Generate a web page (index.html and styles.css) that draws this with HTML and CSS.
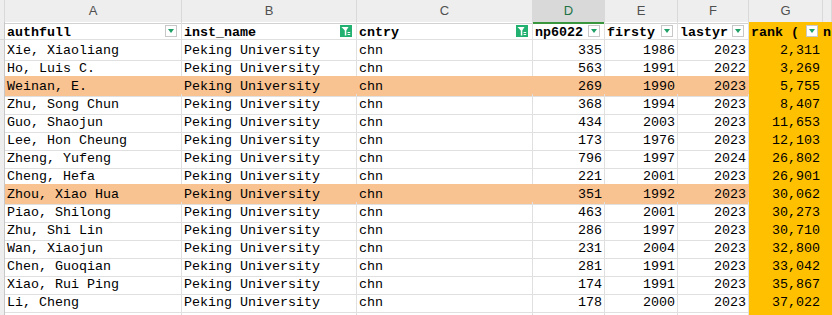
FILE: index.html
```html
<!DOCTYPE html>
<html>
<head>
<meta charset="utf-8">
<link rel="stylesheet" href="styles.css">
</head>
<body>
<div class="sheet">
  <div class="row letters">
    <div class="c stub"></div>
    <div class="c">A</div>
    <div class="c">B</div>
    <div class="c">C</div>
    <div class="c sel">D</div>
    <div class="c">E</div>
    <div class="c">F</div>
    <div class="c">G</div>
    <div class="c"></div>
  </div>
  <div class="row head">
    <div class="c stub"></div>
    <div class="c"><span class="t">authfull</span><span class="dd"></span></div>
    <div class="c"><span class="t">inst_name</span><span class="fl"><svg viewBox="0 0 12 12" width="12" height="12"><path d="M1.5 2h7L6.3 5.4V10.5H4.8V5.4Z" fill="#fff"/><path d="M7.6 7.5h2.6M7.6 9.5h2.6" stroke="#fff" stroke-width="1"/></svg></span></div>
    <div class="c"><span class="t">cntry</span><span class="fl"><svg viewBox="0 0 12 12" width="12" height="12"><path d="M1.5 2h7L6.3 5.4V10.5H4.8V5.4Z" fill="#fff"/><path d="M7.6 7.5h2.6M7.6 9.5h2.6" stroke="#fff" stroke-width="1"/></svg></span></div>
    <div class="c"><span class="t">np6022</span><span class="dd"></span></div>
    <div class="c"><span class="t">firsty</span><span class="dd"></span></div>
    <div class="c"><span class="t">lastyr</span><span class="dd"></span></div>
    <div class="c g"><span class="t">rank (</span><span class="dd"></span></div>
    <div class="c g edge"><span class="t">n</span></div>
  </div>
  <div class="row"><div class="c stub"></div><div class="c">Xie, Xiaoliang</div><div class="c">Peking University</div><div class="c">chn</div><div class="c n">335</div><div class="c n">1986</div><div class="c n">2023</div><div class="c n g">2,311</div><div class="c g"></div></div>
  <div class="row"><div class="c stub"></div><div class="c">Ho, Luis C.</div><div class="c">Peking University</div><div class="c">chn</div><div class="c n">563</div><div class="c n">1991</div><div class="c n">2022</div><div class="c n g">3,269</div><div class="c g"></div></div>
  <div class="row hl"><div class="c stub"></div><div class="c">Weinan, E.</div><div class="c">Peking University</div><div class="c">chn</div><div class="c n">269</div><div class="c n">1990</div><div class="c n">2023</div><div class="c n g">5,755</div><div class="c g"></div></div>
  <div class="row"><div class="c stub"></div><div class="c">Zhu, Song Chun</div><div class="c">Peking University</div><div class="c">chn</div><div class="c n">368</div><div class="c n">1994</div><div class="c n">2023</div><div class="c n g">8,407</div><div class="c g"></div></div>
  <div class="row"><div class="c stub"></div><div class="c">Guo, Shaojun</div><div class="c">Peking University</div><div class="c">chn</div><div class="c n">434</div><div class="c n">2003</div><div class="c n">2023</div><div class="c n g">11,653</div><div class="c g"></div></div>
  <div class="row"><div class="c stub"></div><div class="c">Lee, Hon Cheung</div><div class="c">Peking University</div><div class="c">chn</div><div class="c n">173</div><div class="c n">1976</div><div class="c n">2023</div><div class="c n g">12,103</div><div class="c g"></div></div>
  <div class="row"><div class="c stub"></div><div class="c">Zheng, Yufeng</div><div class="c">Peking University</div><div class="c">chn</div><div class="c n">796</div><div class="c n">1997</div><div class="c n">2024</div><div class="c n g">26,802</div><div class="c g"></div></div>
  <div class="row"><div class="c stub"></div><div class="c">Cheng, Hefa</div><div class="c">Peking University</div><div class="c">chn</div><div class="c n">221</div><div class="c n">2001</div><div class="c n">2023</div><div class="c n g">26,901</div><div class="c g"></div></div>
  <div class="row hl"><div class="c stub"></div><div class="c">Zhou, Xiao Hua</div><div class="c">Peking University</div><div class="c">chn</div><div class="c n">351</div><div class="c n">1992</div><div class="c n">2023</div><div class="c n g">30,062</div><div class="c g"></div></div>
  <div class="row"><div class="c stub"></div><div class="c">Piao, Shilong</div><div class="c">Peking University</div><div class="c">chn</div><div class="c n">463</div><div class="c n">2001</div><div class="c n">2023</div><div class="c n g">30,273</div><div class="c g"></div></div>
  <div class="row"><div class="c stub"></div><div class="c">Zhu, Shi Lin</div><div class="c">Peking University</div><div class="c">chn</div><div class="c n">286</div><div class="c n">1997</div><div class="c n">2023</div><div class="c n g">30,710</div><div class="c g"></div></div>
  <div class="row"><div class="c stub"></div><div class="c">Wan, Xiaojun</div><div class="c">Peking University</div><div class="c">chn</div><div class="c n">231</div><div class="c n">2004</div><div class="c n">2023</div><div class="c n g">32,800</div><div class="c g"></div></div>
  <div class="row"><div class="c stub"></div><div class="c">Chen, Guoqian</div><div class="c">Peking University</div><div class="c">chn</div><div class="c n">281</div><div class="c n">1991</div><div class="c n">2023</div><div class="c n g">33,042</div><div class="c g"></div></div>
  <div class="row"><div class="c stub"></div><div class="c">Xiao, Rui Ping</div><div class="c">Peking University</div><div class="c">chn</div><div class="c n">174</div><div class="c n">1991</div><div class="c n">2023</div><div class="c n g">35,867</div><div class="c g"></div></div>
  <div class="row"><div class="c stub"></div><div class="c">Li, Cheng</div><div class="c">Peking University</div><div class="c">chn</div><div class="c n">178</div><div class="c n">2000</div><div class="c n">2023</div><div class="c n g">37,022</div><div class="c g"></div></div>
  <div class="row"><div class="c stub"></div><div class="c"></div><div class="c"></div><div class="c"></div><div class="c"></div><div class="c"></div><div class="c"></div><div class="c g"></div><div class="c g"></div></div>
</div>
</body>
</html>
```
FILE: styles.css
```css
html, body {
  margin: 0;
  padding: 0;
  background: #ffffff;
}
body {
  width: 832px;
  height: 315px;
  overflow: hidden;
}
.sheet {
  display: flex;
  flex-direction: column;
  font-family: "Liberation Mono", "DejaVu Sans Mono", monospace;
  font-size: 13.33px;
  color: #000;
}
.row {
  display: grid;
  grid-template-columns: 5px 177px 175px 176px 72px 73px 71px 74px 1fr;
  height: 18px;
}
.c {
  box-sizing: border-box;
  border-right: 1px solid #e0e0e0;
  border-bottom: 1px solid #e0e0e0;
  padding: 2px 2px 0 2px;
  line-height: 18px;
  white-space: nowrap;
  min-width: 0;
}
.c.n {
  text-align: right;
}
.c.stub {
  background: #eeeeee;
  border-right: 1px solid #c8c8c8;
  border-bottom: 1px solid #d6d6d6;
  padding: 0;
}
.c.g {
  background: #ffc000;
  border-color: #ffc000;
}
.row.hl .c:not(.stub):not(.g) {
  background: #f8c391;
  border-right-color: #f8c391;
}
.row.letters {
  height: 22px;
  background: #eeeeee;
}
.letters .c {
  font-family: "Liberation Sans", "Noto Sans", sans-serif;
  font-size: 13px;
  color: #505050;
  text-align: center;
  line-height: 22px;
  padding: 0;
  border-right: 1px solid #d9d9d9;
  border-bottom: 1px solid #d2d2d2;
}
.letters .c.sel {
  background: #d9d9d9;
  color: #217346;
  border-bottom: 2px solid #3a963c;
}
.head .c {
  display: flex;
  align-items: flex-start;
  font-weight: bold;
  overflow: hidden;
}
.head .c.edge {
  padding-left: 0;
  padding-right: 0;
}
.head .t {
  flex: 1;
  min-width: 0;
}
.dd, .fl {
  flex: none;
  box-sizing: border-box;
  width: 12px;
  height: 12px;
  margin: 1px 2px 0 2px;
  position: relative;
}
.dd {
  background: #ffffff;
  border: 1px solid #c8c8c8;
}
.dd::after {
  content: "";
  position: absolute;
  left: 2px;
  top: 3px;
  border-left: 3px solid transparent;
  border-right: 3px solid transparent;
  border-top: 4px solid #1f9f66;
}
.fl {
  background: #22b170;
}
.fl svg {
  display: block;
}
```
